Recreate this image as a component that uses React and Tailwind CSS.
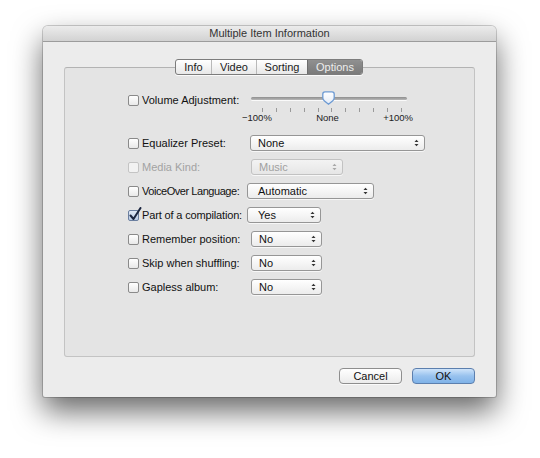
import React from "react";

const font = { fontFamily: '"Liberation Sans", Arial, sans-serif' };

function Arrows({ disabled }) {
  const c = disabled ? "#a8a8a8" : "#333";
  return (
    <svg width="5" height="8" viewBox="0 0 5 8" className="shrink-0">
      <path d="M0.5 3 L2.5 0.8 L4.5 3 Z" fill={c} />
      <path d="M0.5 5 L2.5 7.2 L4.5 5 Z" fill={c} />
    </svg>
  );
}

function Popup({ w, text, pl, disabled }) {
  return (
    <div
      className={`h-[16px] shrink-0 rounded-[3px] border flex items-center justify-between pr-[5px] text-[11px] leading-none shadow-[0_1px_0_rgba(255,255,255,0.7)] ${
        disabled
          ? "border-[#c2c2c2] bg-gradient-to-b from-[#f3f3f3] to-[#e6e6e6] text-[#a0a0a0]"
          : "border-[#969696] bg-gradient-to-b from-[#ffffff] to-[#ececec] text-[#111]"
      }`}
      style={{ width: w, paddingLeft: pl }}
    >
      <span>{text}</span>
      <Arrows disabled={disabled} />
    </div>
  );
}

function Check({ checked, disabled }) {
  return (
    <div className="relative w-[11px] h-[11px] shrink-0">
      <div
        className={`w-[11px] h-[11px] rounded-[2px] border ${
          disabled
            ? "border-[#c4c4c4] bg-[#f2f2f2]"
            : checked
            ? "border-[#6b7fa0] bg-gradient-to-b from-[#dfe9f6] to-[#b9cbe6]"
            : "border-[#8a8a8a] bg-gradient-to-b from-[#ffffff] to-[#e9e9e9]"
        }`}
      />
      {checked && (
        <svg
          width="13"
          height="14"
          viewBox="0 0 13 14"
          className="absolute left-[1px] -top-[3px]"
        >
          <path
            d="M1.5 8.5 L4.5 12 L11.5 1"
            fill="none"
            stroke="#1b2640"
            strokeWidth="2"
            strokeLinecap="round"
            strokeLinejoin="round"
          />
        </svg>
      )}
    </div>
  );
}

function Row({ label, labelW, checked, disabled, track, children }) {
  return (
    <div className="h-6 flex items-center pl-[63px]">
      <div className="flex items-center gap-[3px] shrink-0" style={{ width: labelW }}>
        <Check checked={checked} disabled={disabled} />
        <span
          className={`text-[11px] leading-none whitespace-nowrap ${track || ""} ${
            disabled ? "text-[#a2a2a2]" : "text-[#111]"
          }`}
        >
          {label}
        </span>
      </div>
      {children}
    </div>
  );
}

export default function App() {
  const ticks = Array.from({ length: 11 });
  return (
    <div className="w-[540px] h-[458px] bg-white pl-[43px] pt-[26px]" style={font}>
      <div className="w-[453px] h-[371px] flex flex-col bg-[#ececec] rounded-t-[5px] rounded-b-[2px] shadow-[0_14px_30px_rgba(0,0,0,0.6),0_0_0_1px_rgba(0,0,0,0.18)]">
        <div className="h-[16px] shrink-0 rounded-t-[5px] border-b border-[#9c9c9c] bg-gradient-to-b from-[#ececec] to-[#d2d2d2] flex items-center justify-center">
          <span className="text-[11px] leading-none text-[#333]">Multiple Item Information</span>
        </div>
        <div className="px-[21px] pt-[25px] flex flex-col">
          <div className="h-[290px] rounded-[3px] border border-[#c3c3c3] border-t-[#b3b3b3] bg-[#e4e4e4] flex flex-col">
            <div className="flex justify-center -mt-[9px] pr-[1px]">
              <div className="h-[16px] flex rounded-[3px] border border-[#7c7c7c] overflow-hidden bg-gradient-to-b from-[#ffffff] to-[#e8e8e8] text-[11px] leading-none text-[#1a1a1a] shadow-[0_1px_0_rgba(255,255,255,0.8)]">
                <div className="w-[35px] flex items-center justify-center">Info</div>
                <div className="w-[45px] flex items-center justify-center border-l border-[#b9b9b9]">Video</div>
                <div className="w-[51px] flex items-center justify-center border-l border-[#b9b9b9]">Sorting</div>
                <div className="w-[55px] flex items-center justify-center border-l border-[#6e6e6e] bg-gradient-to-b from-[#909090] to-[#7a7a7a] text-[#ededed]">Options</div>
              </div>
            </div>

            <div className="mt-[17px] h-[39px] flex items-start pl-[63px]">
              <div className="w-[123px] h-[16px] flex items-center gap-[3px] shrink-0">
                <Check />
                <span className="text-[11px] leading-none text-[#111] whitespace-nowrap">Volume Adjustment:</span>
              </div>
              <div className="w-[156px] relative flex flex-col">
                <div className="mt-[5px] h-[3px] rounded-full bg-gradient-to-b from-[#8e8e8e] to-[#b8b8b8] shadow-[0_1px_0_rgba(255,255,255,0.8)]" />
                <svg
                  width="13"
                  height="14"
                  viewBox="0 0 13 14"
                  className="absolute left-[71px] -top-[1px]"
                >
                  <defs>
                    <linearGradient id="th" x1="0" y1="0" x2="0" y2="1">
                      <stop offset="0" stopColor="#ffffff" />
                      <stop offset="1" stopColor="#e4ecf7" />
                    </linearGradient>
                  </defs>
                  <path
                    d="M3 0.8 H10 Q12.2 0.8 12.2 3 V7 Q12.2 8.5 10.5 10 L6.5 13.2 L2.5 10 Q0.8 8.5 0.8 7 V3 Q0.8 0.8 3 0.8 Z"
                    fill="url(#th)"
                    stroke="#6c9ad3"
                    strokeWidth="1.3"
                  />
                </svg>
                <div className="mt-[8px] ml-[11px] w-[140px] h-[4px] flex justify-between">
                  {ticks.map((_, i) => (
                    <div key={i} className="w-px h-[4px] bg-[#9a9a9a]" />
                  ))}
                </div>
                <div className="-ml-[9px] w-[171px] mt-[1px] flex justify-between text-[9.5px] leading-none text-[#222]">
                  <span>−100%</span>
                  <span>None</span>
                  <span>+100%</span>
                </div>
              </div>
            </div>

            <Row label="Equalizer Preset:" labelW={122}>
              <Popup w={175} text="None" pl={7} />
            </Row>
            <Row label="Media Kind:" labelW={123} disabled>
              <Popup w={92} text="Music" pl={7} disabled />
            </Row>
            <Row label="VoiceOver Language:" labelW={119} track="tracking-[-0.45px]">
              <Popup w={127} text="Automatic" pl={10} />
            </Row>
            <Row label="Part of a compilation:" labelW={119} checked track="tracking-[-0.15px]">
              <Popup w={74} text="Yes" pl={10} />
            </Row>
            <Row label="Remember position:" labelW={123}>
              <Popup w={71} text="No" pl={7} />
            </Row>
            <Row label="Skip when shuffling:" labelW={123}>
              <Popup w={71} text="No" pl={7} />
            </Row>
            <Row label="Gapless album:" labelW={123}>
              <Popup w={71} text="No" pl={7} />
            </Row>
          </div>

          <div className="mt-[11px] flex justify-end gap-[10px]">
            <div className="w-[63px] h-[16px] rounded-[4px] border border-[#8e8e8e] bg-gradient-to-b from-[#ffffff] to-[#ebebeb] flex items-center justify-center text-[11px] leading-none text-[#111] shadow-[0_1px_0_rgba(255,255,255,0.8)]">
              Cancel
            </div>
            <div className="w-[63px] h-[16px] rounded-[4px] border border-[#5c7fae] bg-gradient-to-b from-[#cfe4fa] via-[#98c2ee] to-[#7fb2e8] flex items-center justify-center text-[11px] leading-none text-[#111]">
              OK
            </div>
          </div>
        </div>
      </div>
    </div>
  );
}
